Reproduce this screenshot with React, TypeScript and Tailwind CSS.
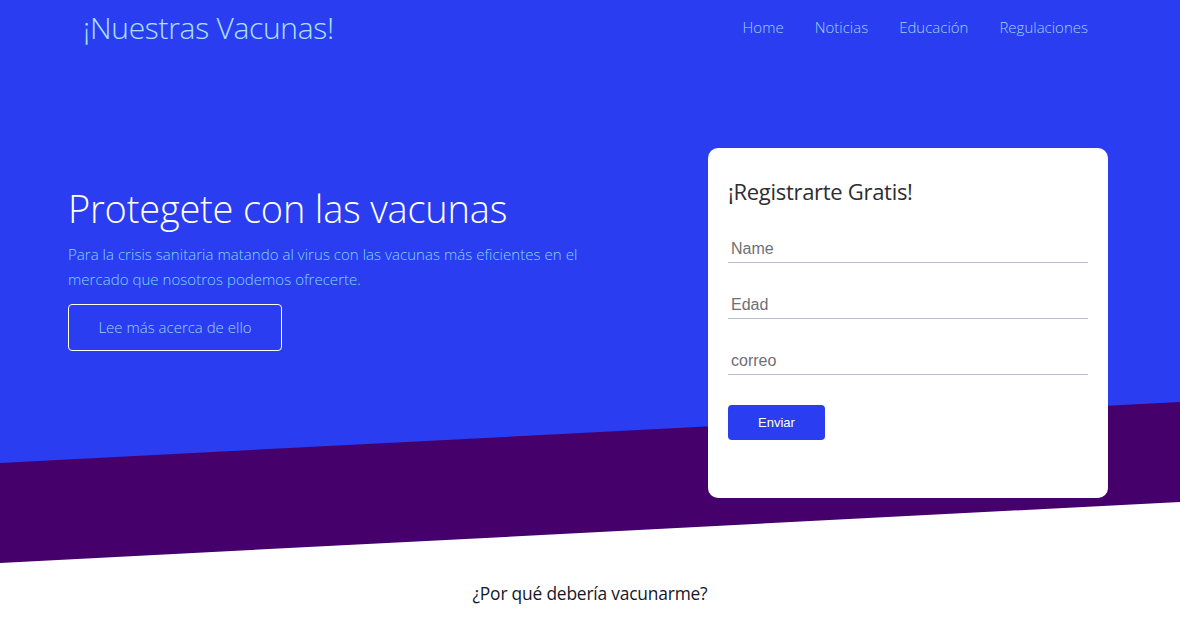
import React from 'react';

const navLinks = ['Home', 'Noticias', 'Educación', 'Regulaciones'];

const Header = () => (
    <header className="relative z-10 flex items-center justify-between h-[56px] pl-[83px] pr-[92px]">
        <h1 className="text-[30px] font-light text-[#a8e4ff] tracking-[-0.3px] leading-none">¡Nuestras Vacunas!</h1>
        <nav className="flex items-center gap-[31px] text-[15px] font-light text-[#9cd2ff] -mt-[1px]">
            {navLinks.map((link) => (
                <a key={link} href="#" className="leading-none">{link}</a>
            ))}
        </nav>
    </header>
);

const RegisterCard = () => (
    <div className="w-[400px] h-[350px] bg-white rounded-[10px] px-5 pt-[32px]">
        <h2 className="text-[22px] text-[#2d2d33] font-normal leading-none tracking-[-0.3px]">¡Registrarte Gratis!</h2>
        <form className="flex flex-col gap-[22px] mt-[27px]" style={{ fontFamily: '"Liberation Sans", Arial, sans-serif' }}>
            {['Name', 'Edad', 'correo'].map((ph) => (
                <input
                    key={ph}
                    placeholder={ph}
                    className="h-[34px] pt-[7px] border-b border-[#b3bfcf] px-[3px] text-[16px] text-[#555] placeholder:text-[#6f6f76] outline-none"
                />
            ))}
            <button type="button" className="mt-[8px] w-[97px] h-[35px] rounded-[4px] bg-[#2b3df0] text-white text-[13px]">
                Enviar
            </button>
        </form>
    </div>
);

export default function App() {
    return (
        <div className="min-h-screen bg-white" style={{ fontFamily: '"Open Sans", "Noto Sans", sans-serif' }}>
            {/* Hero with slanted bands */}
            <section className="relative h-[563px]">
                <div className="absolute inset-0 bg-[#45006c] [clip-path:polygon(0_0,100%_0,100%_502px,0_563px)]" />
                <div className="absolute inset-0 bg-[#2b3df0] [clip-path:polygon(0_0,100%_0,100%_402px,0_463px)]" />

                <Header />

                <div className="relative z-10 flex items-start justify-between pl-[68px] pr-[72px] pt-[92px]">
                    <div className="w-[540px] pt-[41px]">
                        <h2 className="text-[38px] font-light text-white leading-none tracking-[-0.2px]">Protegete con las vacunas</h2>
                        <p className="mt-[15px] text-[15.1px] font-light text-[#7fd6ff] leading-[25px]">
                            Para la crisis sanitaria matando al virus con las vacunas más eficientes en el mercado que nosotros podemos ofrecerte.
                        </p>
                        <button className="mt-[12px] w-[214px] h-[47px] rounded-[4px] border border-white text-[15px] font-light text-[#9cd2ff]">
                            Lee más acerca de ello
                        </button>
                    </div>
                    <RegisterCard />
                </div>
            </section>

            <section className="flex justify-center pt-[17px]">
                <h3 className="text-[17.4px] text-[#16162a] tracking-[-0.2px]">¿Por qué debería vacunarme?</h3>
            </section>
        </div>
    );
}
